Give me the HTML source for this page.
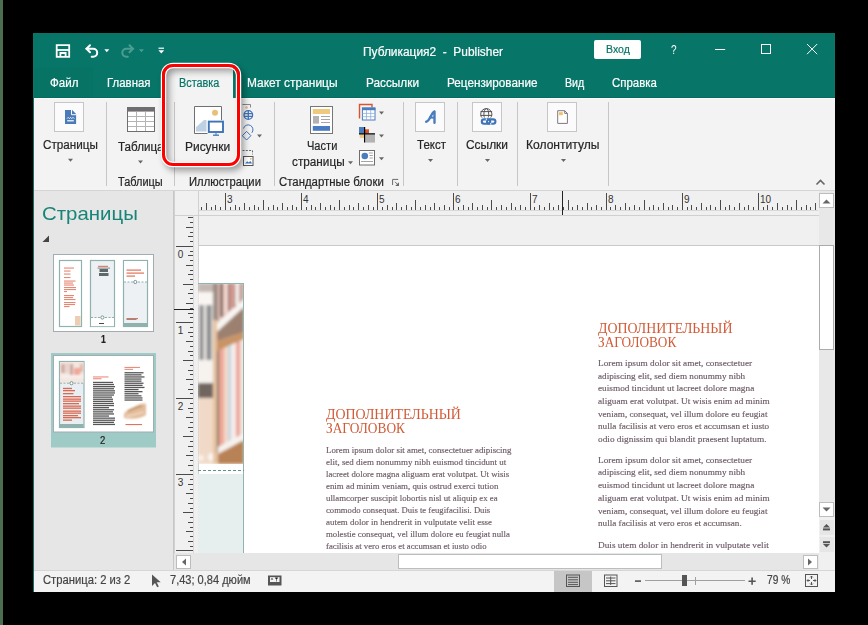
<!DOCTYPE html><html><head><meta charset="utf-8"><style>
html,body{margin:0;padding:0}body{width:868px;height:625px;background:#000;position:relative;overflow:hidden;font-family:"Liberation Sans",sans-serif}
body>div{position:absolute}.t{position:absolute;white-space:pre;line-height:1;transform-origin:0 0}svg{position:absolute;left:0;top:0}
</style></head><body>
<div style="left:0px;top:0px;width:3px;height:625px;background:#4b6e50"></div>
<div style="left:33px;top:33px;width:802px;height:559px;background:#f3f3f3"></div>
<div style="left:33px;top:33px;width:802px;height:65px;background:#077568"></div>
<div style="left:33px;top:33px;width:1px;height:559px;background:#077568"></div>
<div style="left:34px;top:97px;width:801px;height:1px;background:#066b5f"></div>
<div style="left:34px;top:98px;width:801px;height:1px;background:#fbfbfb"></div>
<div style="left:34px;top:68px;width:59px;height:29px;background:#07725f;opacity:.5"></div>
<div style="left:34px;top:190px;width:801px;height:1px;background:#d5d5d5"></div>
<div style="left:594px;top:40px;width:47px;height:19px;background:#fff;border-radius:2px"></div>
<div style="left:163px;top:64px;width:77px;height:35px;background:#f3f3f3;border-radius:10px 10px 0 0"></div>
<div style="left:233px;top:64px;width:7px;height:34px;background:#077568"></div>
<div style="left:106px;top:102px;width:1px;height:84px;background:#c6c6c6"></div>
<div style="left:174px;top:102px;width:1px;height:84px;background:#c6c6c6"></div>
<div style="left:274px;top:102px;width:1px;height:84px;background:#c6c6c6"></div>
<div style="left:403px;top:102px;width:1px;height:84px;background:#c6c6c6"></div>
<div style="left:457px;top:102px;width:1px;height:84px;background:#c6c6c6"></div>
<div style="left:517px;top:102px;width:1px;height:84px;background:#c6c6c6"></div>
<div style="left:608px;top:102px;width:1px;height:84px;background:#c6c6c6"></div>
<div style="left:54px;top:102px;width:30px;height:30px;border:1px solid #c6c6c6;box-sizing:border-box;background:#fbfbfb"></div>
<div style="left:415px;top:102px;width:30px;height:30px;border:1px solid #c6c6c6;box-sizing:border-box;background:#fbfbfb"></div>
<div style="left:472px;top:102px;width:30px;height:30px;border:1px solid #c6c6c6;box-sizing:border-box;background:#fbfbfb"></div>
<div style="left:547px;top:102px;width:30px;height:30px;border:1px solid #c6c6c6;box-sizing:border-box;background:#fbfbfb"></div>
<div style="left:34px;top:191px;width:139px;height:379px;background:#e6e6e6"></div>
<div style="left:173px;top:191px;width:1px;height:379px;background:#c8c8c8"></div>
<div style="left:174px;top:191px;width:661px;height:24px;background:#f0f0f0"></div>
<div style="left:174px;top:191px;width:24px;height:362px;background:#f0f0f0"></div>
<div style="left:198px;top:215px;width:621px;height:31px;background:#f0f0f0"></div>
<div style="left:198px;top:246px;width:621px;height:307px;background:#ffffff"></div>
<div style="left:198px;top:245px;width:621px;height:1px;background:#c9c9c9"></div>
<div style="left:819px;top:191px;width:16px;height:362px;background:#e8e8e8"></div>
<div style="left:174px;top:553px;width:645px;height:17px;background:#e6e6e6"></div>
<div style="left:819px;top:553px;width:16px;height:17px;background:#f0f0f0"></div>
<div style="left:198px;top:210px;width:620px;height:1px;background:#d8d8d8"></div>
<div style="left:174px;top:215px;width:645px;height:1px;background:#d0d0d0"></div>
<div style="left:174px;top:191px;width:1px;height:362px;background:#d0d0d0"></div>
<div style="left:198px;top:191px;width:1px;height:362px;background:#d0d0d0"></div>
<div style="left:193px;top:215px;width:1px;height:338px;background:#d8d8d8"></div>
<div style="left:562px;top:191px;width:1px;height:24px;background:#222"></div>
<div style="left:174px;top:309px;width:20px;height:1px;background:#222"></div>
<svg style="left:198px;top:283px" width="46" height="181" viewBox="0 0 46 181"><defs><filter id="bl" x="-10%" y="-10%" width="120%" height="120%"><feGaussianBlur stdDeviation="1.7"/></filter></defs><g filter="url(#bl)"><rect x="0" y="0" width="46" height="181" fill="#e8d6cc"/><rect x="0" y="0" width="16" height="181" fill="#e4e0dd"/><rect x="0" y="0" width="16" height="9" fill="#c4b8b3"/><rect x="0" y="9" width="16" height="13" fill="#f8f5f2"/><rect x="0" y="22" width="15" height="55" fill="#dcd8d5"/><rect x="2" y="22" width="3" height="55" fill="#7a7e82"/><rect x="9" y="22" width="4" height="55" fill="#808386"/><rect x="0" y="77" width="16" height="23" fill="#f6f2ee"/><rect x="0" y="100" width="16" height="15" fill="#71665f"/><rect x="0" y="115" width="16" height="66" fill="#f0d9c6"/><circle cx="14" cy="174" r="4" fill="#fbf6f2"/><circle cx="3" cy="175" r="3" fill="#f8f0ea"/><rect x="15" y="0" width="6" height="45" fill="#9c8b83"/><rect x="15" y="37" width="5" height="144" fill="#e6c2a0"/><rect x="20" y="0" width="26" height="36" fill="#e6c2ba"/><rect x="22" y="0" width="3" height="34" fill="#75625c"/><rect x="30" y="0" width="2" height="28" fill="#8a6a62"/><rect x="36" y="0" width="1.5" height="24" fill="#6e5a55"/><rect x="26" y="0" width="4" height="30" fill="#f3d6cf"/><rect x="32" y="0" width="4" height="26" fill="#d99c94"/><rect x="37" y="0" width="4" height="22" fill="#f4ebe6"/><rect x="41" y="0" width="5" height="20" fill="#c9a49c"/><rect x="20" y="50" width="26" height="120" fill="#eccabf"/><rect x="20" y="50" width="6" height="120" fill="#eea898"/><rect x="26" y="50" width="4" height="120" fill="#f4d8c8"/><rect x="30" y="50" width="3" height="120" fill="#c3d8e3"/><rect x="33" y="50" width="5" height="120" fill="#f6ecea"/><rect x="38" y="50" width="4" height="120" fill="#eba498"/><rect x="42" y="50" width="4" height="120" fill="#f5e3dc"/><rect x="19" y="60" width="2" height="110" fill="#7a6e68"/><polygon points="19,40 46,16 46,24 19,49" fill="#f8f5f2"/><polygon points="19,49 46,24 46,49 19,58" fill="#9c8070"/><polygon points="19,58 46,49 46,56 19,68" fill="#c89466"/><polygon points="20,164 46,150 46,157 20,171" fill="#f7f2ee"/><polygon points="20,171 46,157 46,181 20,181" fill="#b98256"/></g></svg>
<div style="left:243px;top:283px;width:1px;height:181px;background:#8fb5b0"></div>
<div style="left:198px;top:283px;width:46px;height:1px;background:#8fb5b0"></div>
<div style="left:198px;top:474px;width:46px;height:79px;background:#e6eeee"></div>
<div style="left:243px;top:464px;width:1px;height:89px;background:#8fb5b0"></div>
<div style="left:819px;top:193px;width:15px;height:15px;background:#fff;border:1px solid #bdbdbd;box-sizing:border-box"></div>
<div style="left:819px;top:245px;width:15px;height:105px;background:#fff;border:1px solid #ababab;box-sizing:border-box"></div>
<div style="left:819px;top:502px;width:15px;height:15px;background:#fff;border:1px solid #bdbdbd;box-sizing:border-box"></div>
<div style="left:819px;top:517px;width:16px;height:36px;background:#f0f0f0"></div>
<div style="left:820px;top:520px;width:14px;height:15px;background:#e6e6e6"></div>
<div style="left:820px;top:537px;width:14px;height:15px;background:#e6e6e6"></div>
<div style="left:176px;top:555px;width:15px;height:14px;background:#fff;border:1px solid #bdbdbd;box-sizing:border-box"></div>
<div style="left:398px;top:554px;width:264px;height:15px;background:#fff;border:1px solid #bdbdbd;box-sizing:border-box"></div>
<div style="left:803px;top:555px;width:15px;height:14px;background:#fff;border:1px solid #bdbdbd;box-sizing:border-box"></div>
<div style="left:34px;top:570px;width:801px;height:1px;background:#d6d6d6"></div>
<div style="left:34px;top:571px;width:801px;height:21px;background:#f3f3f3"></div>
<div style="left:554px;top:571px;width:38px;height:21px;background:#c6c6c6"></div>
<div style="left:645px;top:580px;width:100px;height:1px;background:#a0a0a0"></div>
<div style="left:695px;top:577px;width:1px;height:8px;background:#a0a0a0"></div>
<div style="left:682px;top:575px;width:5px;height:11px;background:#555"></div>
<svg width="868" height="625" viewBox="0 0 868 625"><g fill="none" stroke="#fff" stroke-width="1.8"><path d="M56.7 45.1h12.5v11.7h-12.5z"/><path d="M56.7 50h12.5"/><path d="M60.4 57v-4h5.2v4"/></g><g fill="none" stroke="#fff" stroke-width="2" stroke-linecap="round"><path d="M86.5 48.8h6.7a4 4 0 0 1 0 8h-1.5"/><path d="M90 45.3l-3.5 3.5 3.5 3.5"/></g><path d="M104.3 49.3h5l-2.5 2.9z" fill="#fff"/><g fill="none" stroke="#4d9d92" stroke-width="2" stroke-linecap="round"><path d="M133 48.8h-6.7a4 4 0 0 0 0 8h1.5"/><path d="M129.5 45.3l3.5 3.5-3.5 3.5"/></g><path d="M138.9 49.3h5l-2.5 2.9z" fill="#4d9d92"/><rect x="158.5" y="47.6" width="5.5" height="1.2" fill="#fff"/><path d="M158.4 50.2h5.8l-2.9 3.4z" fill="#fff"/><g fill="none" stroke="#fff" stroke-width="1"><path d="M715 49.5h10.2"/><rect x="761.5" y="44.5" width="9" height="9"/><path d="M807 44l10.2 10.2M817.2 44L807 54.2"/></g><path d="M68.0 158.8h5l-2.5 3z" fill="#666"/><path d="M138.0 160.5h5l-2.5 3z" fill="#666"/><path d="M257.0 134.5h5l-2.5 3z" fill="#666"/><path d="M348.0 161.2h5l-2.5 3z" fill="#666"/><path d="M379.0 111.5h5l-2.5 3z" fill="#666"/><path d="M379.0 134.5h5l-2.5 3z" fill="#666"/><path d="M379.0 157.3h5l-2.5 3z" fill="#666"/><path d="M428.0 159h5l-2.5 3z" fill="#666"/><path d="M485.0 159h5l-2.5 3z" fill="#666"/><path d="M561.0 159h5l-2.5 3z" fill="#666"/><path d="M65 110h7.2l3.9 3.9v10h-11.1z" fill="#4a7ab8"/><path d="M71.5 109.5v5.2h5" fill="none" stroke="#fbfbfb" stroke-width="1"/><path d="M67 118.6l1.2-1.2 1.2 1.2 1.2-1.2 1.2 1.2 1.2-1.2 1.2 1.2" fill="none" stroke="#fff" stroke-width="0.9"/><rect x="67.2" y="120.2" width="6.6" height="1.2" fill="#fff"/><rect x="127.5" y="107.5" width="27" height="24" fill="#fff" stroke="#6e6e6e" stroke-width="1"/><rect x="127" y="107" width="28" height="4.6" fill="#6e6e6e"/><g stroke="#b4b4b4" stroke-width="1"><path d="M136.5 111.6v19.4M145.5 111.6v19.4M128 116.5h26M128 121.5h26M128 126.5h26"/></g><path d="M207.5 133.5h-13v-27h27v13.5" fill="#fff" stroke="#707070" stroke-width="1"/><circle cx="215" cy="112.8" r="3" fill="#e9c07a"/><path d="M196 131.5v-4.2l8-7.3h2.5v11.5z" fill="#bed0e3"/><rect x="208.8" y="121.6" width="14.2" height="10.4" fill="#fff" stroke="#3f74b8" stroke-width="1.9"/><path d="M213 135.2h6" stroke="#3f74b8" stroke-width="1.3"/><path d="M216 133v2" stroke="#3f74b8" stroke-width="1"/><path d="M242.5 104.5h8v3" fill="none" stroke="#888" stroke-width="1"/><circle cx="246.5" cy="107.5" r="1.2" fill="#e9b27a"/><g fill="none" stroke="#3f74b8" stroke-width="1.3"><circle cx="248.3" cy="115" r="4.3"/><path d="M244 113.6h8.6M244 116.4h8.6M248.3 110.7v8.6"/></g><g fill="none" stroke="#3f74b8" stroke-width="1"><path d="M243.5 128.5a4.8 4.8 0 1 1 8.3 4.3"/><path d="M246.6 131.4l4.3 4.3-4.3 4.3-4.3-4.3z"/></g><path d="M242.5 150.5h10v4" fill="none" stroke="#666" stroke-width="1" stroke-dasharray="2 1.3"/><rect x="243.5" y="156.5" width="9.5" height="9" fill="#fff" stroke="#555" stroke-width="1"/><path d="M245 163.6l2.2-2.3 1.5 1.3 1.6-1.5 1.9 2.5z" fill="#3f74b8"/><rect x="250" y="158" width="1.6" height="1.6" fill="#e9b27a"/><rect x="310.5" y="106.5" width="22" height="27" fill="#fff" stroke="#767676" stroke-width="1"/><rect x="312.8" y="109" width="17.2" height="5" fill="#efc97e"/><rect x="313" y="116" width="6" height="7.6" fill="#b3b3b3"/><g stroke="#a6a6a6" stroke-width="1"><path d="M321 116.5h9M321 119.5h9M321 122.5h9"/></g><rect x="312.8" y="126" width="17.2" height="4.8" fill="#4a7dbf"/><path d="M359.5 118.5v-14h12.5v3" fill="none" stroke="#d9532c" stroke-width="1.4"/><rect x="362.4" y="108" width="12.6" height="12" fill="#fff" stroke="#4a7dbf" stroke-width="1"/><rect x="362" y="107.6" width="13.4" height="2.6" fill="#4a7dbf"/><g stroke="#8fb0dc" stroke-width="0.8"><path d="M366.5 110v10M370.7 110v10M362.4 113.4h12.6M362.4 116.7h12.6"/></g><rect x="359" y="127" width="5.3" height="6.6" fill="#4a7dbf"/><rect x="365" y="129.3" width="4" height="4.3" fill="#d9532c"/><rect x="359.7" y="134.4" width="4.4" height="3.5" fill="#efc97e"/><rect x="365.3" y="134.3" width="9.7" height="8.3" fill="#b3b3b3"/><path d="M364.6 127v15.6M359 133.9h16" stroke="#000" stroke-width="1.2"/><rect x="359.5" y="150.5" width="15" height="14.5" fill="#fff" stroke="#6e6e6e" stroke-width="1"/><circle cx="364.8" cy="156" r="3.3" fill="#4a7dbf"/><g stroke="#9a9a9a" stroke-width="0.9"><path d="M368.8 153h4M369.5 155.5h3.3M369.5 158h3.3M361 161.5h12"/></g><path d="M426.2 121.8c1.5-.3 2.9-2.2 4.3-5 1.5-2.9 2.6-4.9 4-5.4v11.4" fill="none" stroke="#4a7dbf" stroke-width="2.4" stroke-linecap="round" stroke-linejoin="round"/><path d="M429 117.6h5.6" stroke="#4a7dbf" stroke-width="2"/><defs><clipPath id="gc"><rect x="478" y="106" width="18" height="11.6"/></clipPath></defs><g clip-path="url(#gc)" fill="none" stroke="#555" stroke-width="1"><circle cx="486.3" cy="114.2" r="5.6"/><ellipse cx="486.3" cy="114.2" rx="2.4" ry="5.6"/><path d="M480.5 111.6h11.6M480.5 115.4h11.6"/></g><g fill="none" stroke="#3f74b8" stroke-width="2.1"><rect x="481.8" y="119.4" width="8.4" height="4.4" rx="2.2"/><rect x="487" y="119.4" width="8.4" height="4.4" rx="2.2"/></g><path d="M486.3 118.5v1.8M490.8 122.9v1.8" stroke="#fbfbfb" stroke-width="1"/><path d="M557.7 110.7h7l2.7 2.7v10h-9.7z" fill="#fff" stroke="#7a7a7a" stroke-width="1"/><path d="M564.7 110.7v2.7h2.7" fill="none" stroke="#7a7a7a" stroke-width="1"/><rect x="559" y="112.2" width="3.8" height="3" fill="#efc06a"/><path d="M392.6 185v-5.6h5.6" fill="none" stroke="#6a6a6a" stroke-width="1"/><path d="M395 181.8l3 3" stroke="#6a6a6a" stroke-width="1"/><path d="M399 182.2v3.8h-3.8z" fill="#6a6a6a"/><path d="M816.5 184.5l4-4 4 4" fill="none" stroke="#666" stroke-width="1.6"/><path d="M49 235.5v6.5h-6.5z" fill="#444"/><rect x="201" y="207" width="1" height="3" fill="#4a4a4a"/><rect x="206" y="203" width="1" height="7" fill="#4a4a4a"/><rect x="211" y="207" width="1" height="3" fill="#4a4a4a"/><rect x="215" y="205" width="1" height="5" fill="#4a4a4a"/><rect x="220" y="207" width="1" height="3" fill="#4a4a4a"/><rect x="225" y="193" width="1" height="17" fill="#4a4a4a"/><rect x="230" y="207" width="1" height="3" fill="#4a4a4a"/><rect x="235" y="205" width="1" height="5" fill="#4a4a4a"/><rect x="239" y="207" width="1" height="3" fill="#4a4a4a"/><rect x="244" y="203" width="1" height="7" fill="#4a4a4a"/><rect x="249" y="207" width="1" height="3" fill="#4a4a4a"/><rect x="254" y="205" width="1" height="5" fill="#4a4a4a"/><rect x="258" y="207" width="1" height="3" fill="#4a4a4a"/><rect x="263" y="200" width="1" height="10" fill="#4a4a4a"/><rect x="268" y="207" width="1" height="3" fill="#4a4a4a"/><rect x="273" y="205" width="1" height="5" fill="#4a4a4a"/><rect x="277" y="207" width="1" height="3" fill="#4a4a4a"/><rect x="282" y="203" width="1" height="7" fill="#4a4a4a"/><rect x="287" y="207" width="1" height="3" fill="#4a4a4a"/><rect x="292" y="205" width="1" height="5" fill="#4a4a4a"/><rect x="296" y="207" width="1" height="3" fill="#4a4a4a"/><rect x="301" y="193" width="1" height="17" fill="#4a4a4a"/><rect x="306" y="207" width="1" height="3" fill="#4a4a4a"/><rect x="311" y="205" width="1" height="5" fill="#4a4a4a"/><rect x="315" y="207" width="1" height="3" fill="#4a4a4a"/><rect x="320" y="203" width="1" height="7" fill="#4a4a4a"/><rect x="325" y="207" width="1" height="3" fill="#4a4a4a"/><rect x="330" y="205" width="1" height="5" fill="#4a4a4a"/><rect x="334" y="207" width="1" height="3" fill="#4a4a4a"/><rect x="339" y="200" width="1" height="10" fill="#4a4a4a"/><rect x="344" y="207" width="1" height="3" fill="#4a4a4a"/><rect x="349" y="205" width="1" height="5" fill="#4a4a4a"/><rect x="353" y="207" width="1" height="3" fill="#4a4a4a"/><rect x="358" y="203" width="1" height="7" fill="#4a4a4a"/><rect x="363" y="207" width="1" height="3" fill="#4a4a4a"/><rect x="368" y="205" width="1" height="5" fill="#4a4a4a"/><rect x="373" y="207" width="1" height="3" fill="#4a4a4a"/><rect x="377" y="193" width="1" height="17" fill="#4a4a4a"/><rect x="382" y="207" width="1" height="3" fill="#4a4a4a"/><rect x="387" y="205" width="1" height="5" fill="#4a4a4a"/><rect x="392" y="207" width="1" height="3" fill="#4a4a4a"/><rect x="396" y="203" width="1" height="7" fill="#4a4a4a"/><rect x="401" y="207" width="1" height="3" fill="#4a4a4a"/><rect x="406" y="205" width="1" height="5" fill="#4a4a4a"/><rect x="411" y="207" width="1" height="3" fill="#4a4a4a"/><rect x="415" y="200" width="1" height="10" fill="#4a4a4a"/><rect x="420" y="207" width="1" height="3" fill="#4a4a4a"/><rect x="425" y="205" width="1" height="5" fill="#4a4a4a"/><rect x="430" y="207" width="1" height="3" fill="#4a4a4a"/><rect x="434" y="203" width="1" height="7" fill="#4a4a4a"/><rect x="439" y="207" width="1" height="3" fill="#4a4a4a"/><rect x="444" y="205" width="1" height="5" fill="#4a4a4a"/><rect x="449" y="207" width="1" height="3" fill="#4a4a4a"/><rect x="453" y="193" width="1" height="17" fill="#4a4a4a"/><rect x="458" y="207" width="1" height="3" fill="#4a4a4a"/><rect x="463" y="205" width="1" height="5" fill="#4a4a4a"/><rect x="468" y="207" width="1" height="3" fill="#4a4a4a"/><rect x="472" y="203" width="1" height="7" fill="#4a4a4a"/><rect x="477" y="207" width="1" height="3" fill="#4a4a4a"/><rect x="482" y="205" width="1" height="5" fill="#4a4a4a"/><rect x="487" y="207" width="1" height="3" fill="#4a4a4a"/><rect x="491" y="200" width="1" height="10" fill="#4a4a4a"/><rect x="496" y="207" width="1" height="3" fill="#4a4a4a"/><rect x="501" y="205" width="1" height="5" fill="#4a4a4a"/><rect x="506" y="207" width="1" height="3" fill="#4a4a4a"/><rect x="511" y="203" width="1" height="7" fill="#4a4a4a"/><rect x="515" y="207" width="1" height="3" fill="#4a4a4a"/><rect x="520" y="205" width="1" height="5" fill="#4a4a4a"/><rect x="525" y="207" width="1" height="3" fill="#4a4a4a"/><rect x="530" y="193" width="1" height="17" fill="#4a4a4a"/><rect x="534" y="207" width="1" height="3" fill="#4a4a4a"/><rect x="539" y="205" width="1" height="5" fill="#4a4a4a"/><rect x="544" y="207" width="1" height="3" fill="#4a4a4a"/><rect x="549" y="203" width="1" height="7" fill="#4a4a4a"/><rect x="553" y="207" width="1" height="3" fill="#4a4a4a"/><rect x="558" y="205" width="1" height="5" fill="#4a4a4a"/><rect x="563" y="207" width="1" height="3" fill="#4a4a4a"/><rect x="568" y="200" width="1" height="10" fill="#4a4a4a"/><rect x="572" y="207" width="1" height="3" fill="#4a4a4a"/><rect x="577" y="205" width="1" height="5" fill="#4a4a4a"/><rect x="582" y="207" width="1" height="3" fill="#4a4a4a"/><rect x="587" y="203" width="1" height="7" fill="#4a4a4a"/><rect x="591" y="207" width="1" height="3" fill="#4a4a4a"/><rect x="596" y="205" width="1" height="5" fill="#4a4a4a"/><rect x="601" y="207" width="1" height="3" fill="#4a4a4a"/><rect x="606" y="193" width="1" height="17" fill="#4a4a4a"/><rect x="610" y="207" width="1" height="3" fill="#4a4a4a"/><rect x="615" y="205" width="1" height="5" fill="#4a4a4a"/><rect x="620" y="207" width="1" height="3" fill="#4a4a4a"/><rect x="625" y="203" width="1" height="7" fill="#4a4a4a"/><rect x="629" y="207" width="1" height="3" fill="#4a4a4a"/><rect x="634" y="205" width="1" height="5" fill="#4a4a4a"/><rect x="639" y="207" width="1" height="3" fill="#4a4a4a"/><rect x="644" y="200" width="1" height="10" fill="#4a4a4a"/><rect x="649" y="207" width="1" height="3" fill="#4a4a4a"/><rect x="653" y="205" width="1" height="5" fill="#4a4a4a"/><rect x="658" y="207" width="1" height="3" fill="#4a4a4a"/><rect x="663" y="203" width="1" height="7" fill="#4a4a4a"/><rect x="668" y="207" width="1" height="3" fill="#4a4a4a"/><rect x="672" y="205" width="1" height="5" fill="#4a4a4a"/><rect x="677" y="207" width="1" height="3" fill="#4a4a4a"/><rect x="682" y="193" width="1" height="17" fill="#4a4a4a"/><rect x="687" y="207" width="1" height="3" fill="#4a4a4a"/><rect x="691" y="205" width="1" height="5" fill="#4a4a4a"/><rect x="696" y="207" width="1" height="3" fill="#4a4a4a"/><rect x="701" y="203" width="1" height="7" fill="#4a4a4a"/><rect x="706" y="207" width="1" height="3" fill="#4a4a4a"/><rect x="710" y="205" width="1" height="5" fill="#4a4a4a"/><rect x="715" y="207" width="1" height="3" fill="#4a4a4a"/><rect x="720" y="200" width="1" height="10" fill="#4a4a4a"/><rect x="725" y="207" width="1" height="3" fill="#4a4a4a"/><rect x="729" y="205" width="1" height="5" fill="#4a4a4a"/><rect x="734" y="207" width="1" height="3" fill="#4a4a4a"/><rect x="739" y="203" width="1" height="7" fill="#4a4a4a"/><rect x="744" y="207" width="1" height="3" fill="#4a4a4a"/><rect x="748" y="205" width="1" height="5" fill="#4a4a4a"/><rect x="753" y="207" width="1" height="3" fill="#4a4a4a"/><rect x="758" y="193" width="1" height="17" fill="#4a4a4a"/><rect x="763" y="207" width="1" height="3" fill="#4a4a4a"/><rect x="767" y="205" width="1" height="5" fill="#4a4a4a"/><rect x="772" y="207" width="1" height="3" fill="#4a4a4a"/><rect x="777" y="203" width="1" height="7" fill="#4a4a4a"/><rect x="782" y="207" width="1" height="3" fill="#4a4a4a"/><rect x="787" y="205" width="1" height="5" fill="#4a4a4a"/><rect x="791" y="207" width="1" height="3" fill="#4a4a4a"/><rect x="796" y="200" width="1" height="10" fill="#4a4a4a"/><rect x="801" y="207" width="1" height="3" fill="#4a4a4a"/><rect x="806" y="205" width="1" height="5" fill="#4a4a4a"/><rect x="810" y="207" width="1" height="3" fill="#4a4a4a"/><rect x="815" y="203" width="1" height="7" fill="#4a4a4a"/><rect x="188" y="217" width="5" height="1" fill="#4a4a4a"/><rect x="190" y="222" width="3" height="1" fill="#4a4a4a"/><rect x="186" y="227" width="7" height="1" fill="#4a4a4a"/><rect x="190" y="232" width="3" height="1" fill="#4a4a4a"/><rect x="188" y="236" width="5" height="1" fill="#4a4a4a"/><rect x="190" y="241" width="3" height="1" fill="#4a4a4a"/><rect x="176" y="246" width="17" height="1" fill="#4a4a4a"/><rect x="190" y="251" width="3" height="1" fill="#4a4a4a"/><rect x="188" y="255" width="5" height="1" fill="#4a4a4a"/><rect x="190" y="260" width="3" height="1" fill="#4a4a4a"/><rect x="186" y="265" width="7" height="1" fill="#4a4a4a"/><rect x="190" y="270" width="3" height="1" fill="#4a4a4a"/><rect x="188" y="274" width="5" height="1" fill="#4a4a4a"/><rect x="190" y="279" width="3" height="1" fill="#4a4a4a"/><rect x="183" y="284" width="10" height="1" fill="#4a4a4a"/><rect x="190" y="289" width="3" height="1" fill="#4a4a4a"/><rect x="188" y="293" width="5" height="1" fill="#4a4a4a"/><rect x="190" y="298" width="3" height="1" fill="#4a4a4a"/><rect x="186" y="303" width="7" height="1" fill="#4a4a4a"/><rect x="190" y="308" width="3" height="1" fill="#4a4a4a"/><rect x="188" y="313" width="5" height="1" fill="#4a4a4a"/><rect x="190" y="317" width="3" height="1" fill="#4a4a4a"/><rect x="176" y="322" width="17" height="1" fill="#4a4a4a"/><rect x="190" y="327" width="3" height="1" fill="#4a4a4a"/><rect x="188" y="332" width="5" height="1" fill="#4a4a4a"/><rect x="190" y="336" width="3" height="1" fill="#4a4a4a"/><rect x="186" y="341" width="7" height="1" fill="#4a4a4a"/><rect x="190" y="346" width="3" height="1" fill="#4a4a4a"/><rect x="188" y="351" width="5" height="1" fill="#4a4a4a"/><rect x="190" y="355" width="3" height="1" fill="#4a4a4a"/><rect x="183" y="360" width="10" height="1" fill="#4a4a4a"/><rect x="190" y="365" width="3" height="1" fill="#4a4a4a"/><rect x="188" y="370" width="5" height="1" fill="#4a4a4a"/><rect x="190" y="374" width="3" height="1" fill="#4a4a4a"/><rect x="186" y="379" width="7" height="1" fill="#4a4a4a"/><rect x="190" y="384" width="3" height="1" fill="#4a4a4a"/><rect x="188" y="389" width="5" height="1" fill="#4a4a4a"/><rect x="190" y="393" width="3" height="1" fill="#4a4a4a"/><rect x="176" y="398" width="17" height="1" fill="#4a4a4a"/><rect x="190" y="403" width="3" height="1" fill="#4a4a4a"/><rect x="188" y="408" width="5" height="1" fill="#4a4a4a"/><rect x="190" y="412" width="3" height="1" fill="#4a4a4a"/><rect x="186" y="417" width="7" height="1" fill="#4a4a4a"/><rect x="190" y="422" width="3" height="1" fill="#4a4a4a"/><rect x="188" y="427" width="5" height="1" fill="#4a4a4a"/><rect x="190" y="431" width="3" height="1" fill="#4a4a4a"/><rect x="183" y="436" width="10" height="1" fill="#4a4a4a"/><rect x="190" y="441" width="3" height="1" fill="#4a4a4a"/><rect x="188" y="446" width="5" height="1" fill="#4a4a4a"/><rect x="190" y="451" width="3" height="1" fill="#4a4a4a"/><rect x="186" y="455" width="7" height="1" fill="#4a4a4a"/><rect x="190" y="460" width="3" height="1" fill="#4a4a4a"/><rect x="188" y="465" width="5" height="1" fill="#4a4a4a"/><rect x="190" y="470" width="3" height="1" fill="#4a4a4a"/><rect x="176" y="474" width="17" height="1" fill="#4a4a4a"/><rect x="190" y="479" width="3" height="1" fill="#4a4a4a"/><rect x="188" y="484" width="5" height="1" fill="#4a4a4a"/><rect x="190" y="489" width="3" height="1" fill="#4a4a4a"/><rect x="186" y="493" width="7" height="1" fill="#4a4a4a"/><rect x="190" y="498" width="3" height="1" fill="#4a4a4a"/><rect x="188" y="503" width="5" height="1" fill="#4a4a4a"/><rect x="190" y="508" width="3" height="1" fill="#4a4a4a"/><rect x="183" y="512" width="10" height="1" fill="#4a4a4a"/><rect x="190" y="517" width="3" height="1" fill="#4a4a4a"/><rect x="188" y="522" width="5" height="1" fill="#4a4a4a"/><rect x="190" y="527" width="3" height="1" fill="#4a4a4a"/><rect x="186" y="531" width="7" height="1" fill="#4a4a4a"/><rect x="190" y="536" width="3" height="1" fill="#4a4a4a"/><rect x="188" y="541" width="5" height="1" fill="#4a4a4a"/><rect x="190" y="546" width="3" height="1" fill="#4a4a4a"/><rect x="176" y="550" width="17" height="1" fill="#4a4a4a"/><path d="M198 470.5h46" stroke="#5f908b" stroke-width="1" stroke-dasharray="3 2"/><path d="M822.5 203.5h8l-4-4z" fill="#666"/><path d="M822.5 507.5h8l-4 4z" fill="#666"/><path d="M823 527.6h7l-3.5-3.6z" fill="#555"/><rect x="823" y="528.4" width="7" height="2" fill="#555"/><rect x="823" y="541.2" width="7" height="2" fill="#555"/><path d="M823 544h7l-3.5 3.6z" fill="#555"/><path d="M186 558.5v7l-4-3.5z" fill="#666"/><path d="M808 558.5v7l4-3.5z" fill="#666"/><path d="M152 574.5v11.5l3-3 2.2 4.3 1.6-.8-2.1-4.2h4z" fill="#555"/><rect x="268" y="575.5" width="13.5" height="10" fill="#555"/><rect x="270" y="577" width="9.5" height="5" fill="#f3f3f3"/><path d="M271 577.5l2 2.5M273 577.5l-2 2.5M275 577.5l1.5 2 1.5-2M276.5 579.5v2" stroke="#555" stroke-width="0.7"/><rect x="566.5" y="575" width="13" height="11.5" fill="none" stroke="#555" stroke-width="1"/><path d="M568 577.3h10M568 579.8h10M568 582.3h10M568 584.6h10" stroke="#555" stroke-width="1"/><rect x="604.5" y="575" width="12.5" height="11.5" fill="none" stroke="#555" stroke-width="1"/><path d="M606 578h9.5M606 580.8h9.5M606 583.6h9.5M610.7 576.5v8.5" stroke="#555" stroke-width="1"/><rect x="635" y="580.3" width="6" height="1.6" fill="#555"/><path d="M748.5 581.2h7.2M752.1 577.6v7.2" stroke="#555" stroke-width="1.6"/><rect x="805.5" y="574.5" width="12" height="12" fill="none" stroke="#555" stroke-width="1"/><path d="M811.5 576v3M811.5 582v3M807 580.5h3M813 580.5h3" stroke="#555" stroke-width="1"/><path d="M810 577.5l1.5-1.5 1.5 1.5M810 583.5l1.5 1.5 1.5-1.5M808.5 579l-1.5 1.5 1.5 1.5M814.5 579l1.5 1.5-1.5 1.5" fill="none" stroke="#555" stroke-width="0.8"/><g><rect x="53.5" y="254.5" width="100" height="77" fill="#fff" stroke="#a3abb3" stroke-width="1"/><rect x="59.5" y="260.5" width="22" height="66" fill="#fff" stroke="#8fb2af" stroke-width="1.2"/><rect x="64" y="267.5" width="10" height="1.1" fill="#e2725a" opacity="0.85"/><rect x="64" y="270.5" width="6.5" height="1.1" fill="#e2725a" opacity="0.85"/><rect x="64" y="273.5" width="6.5" height="1.1" fill="#e2725a" opacity="0.85"/><rect x="64" y="277.0" width="6.5" height="1.1" fill="#e2725a" opacity="0.85"/><rect x="64" y="280.5" width="11.5" height="1.1" fill="#e2725a" opacity="0.85"/><rect x="64" y="282.5" width="9" height="1.1" fill="#e2725a" opacity="0.85"/><rect x="64" y="284.5" width="10" height="1.1" fill="#e2725a" opacity="0.85"/><rect x="64" y="287.0" width="12" height="1.1" fill="#e2725a" opacity="0.85"/><rect x="64" y="289.0" width="12" height="1.1" fill="#e2725a" opacity="0.85"/><rect x="64" y="291.0" width="3" height="1.1" fill="#e2725a" opacity="0.85"/><rect x="64" y="295.0" width="10" height="1.1" fill="#e2725a" opacity="0.85"/><rect x="64" y="297.0" width="9" height="1.1" fill="#e2725a" opacity="0.85"/><rect x="64" y="299.0" width="11.5" height="1.1" fill="#e2725a" opacity="0.85"/><rect x="64" y="302.0" width="11.5" height="1.1" fill="#e2725a" opacity="0.85"/><rect x="64" y="304.0" width="11" height="1.1" fill="#e2725a" opacity="0.85"/><rect x="64" y="306.0" width="5.5" height="1.1" fill="#e2725a" opacity="0.85"/><rect x="75" y="316" width="5.5" height="9.5" fill="#e8c0a0" opacity="0.8"/><rect x="90.5" y="260.5" width="24" height="66" fill="#eef1f4" stroke="#8fb2af" stroke-width="1.2"/><rect x="91" y="318" width="23" height="8.2" fill="#fff"/><rect x="98" y="265.8" width="10" height="1.1" fill="#e2725a"/><rect x="97.5" y="267.6" width="12.5" height="1" fill="#7c8585"/><rect x="99.5" y="269" width="8.5" height="3" fill="#5d6a6a"/><rect x="99" y="273" width="9.5" height="3" fill="#5d6a6a"/><path d="M91 317.5h23" stroke="#8fb2af" stroke-width="1" stroke-dasharray="2 1.5"/><circle cx="102.4" cy="317.5" r="1.6" fill="#fff" stroke="#6a8a88" stroke-width="0.9"/><rect x="99" y="323" width="5" height="1" fill="#4a4a4a"/><rect x="123.5" y="260.5" width="24" height="66" fill="#eef1f4" stroke="#8fb2af" stroke-width="1.2"/><rect x="124" y="261" width="23" height="21" fill="#fff"/><rect x="126.5" y="269.5" width="14.5" height="1.2" fill="#e2725a"/><rect x="126.5" y="272.5" width="17.5" height="1.2" fill="#e2725a"/><rect x="126.5" y="275.5" width="8.5" height="1.2" fill="#e2725a"/><path d="M124 282h23" stroke="#8fb2af" stroke-width="1" stroke-dasharray="2 1.5"/><circle cx="135.3" cy="282" r="1.6" fill="#fff" stroke="#6a8a88" stroke-width="0.9"/><rect x="126.5" y="318" width="11.5" height="1.1" fill="#e2725a"/><rect x="126.5" y="319.2" width="10" height="0.8" fill="#777"/><rect x="123.5" y="323" width="24.5" height="4" fill="#8fb2af"/><rect x="51" y="353" width="105" height="94.5" fill="#9ecbc5"/><rect x="53.5" y="355.5" width="100" height="76.5" fill="#fff" stroke="#a3abb3" stroke-width="1"/><rect x="59.5" y="361.5" width="24.5" height="66" fill="#e9eef2" stroke="#8fb2af" stroke-width="1.2"/><defs><filter id="tb" x="-20%" y="-20%" width="140%" height="140%"><feGaussianBlur stdDeviation="0.8"/></filter></defs><rect x="60" y="362" width="23.5" height="21" fill="#f3e6e0"/><g filter="url(#tb)"><rect x="61" y="364" width="4" height="9" fill="#d2b0a6"/><rect x="66" y="363" width="3" height="10" fill="#e8cfc8"/><rect x="70" y="364" width="3" height="11" fill="#c9a8a0"/><rect x="74" y="368" width="6" height="9" fill="#f2a898"/><rect x="80" y="364" width="3" height="8" fill="#e0b8a8"/><rect x="61" y="375" width="22" height="3" fill="#f7efea"/></g><path d="M60 383.2h23.5" stroke="#8fb2af" stroke-width="1" stroke-dasharray="2 1.5"/><circle cx="71.5" cy="383.2" r="1.6" fill="#fff" stroke="#6a8a88" stroke-width="0.9"/><rect x="63" y="387.8" width="9" height="1.3" fill="#d95a3e" opacity="0.9"/><rect x="63" y="390.0" width="12" height="1.3" fill="#d95a3e" opacity="0.9"/><rect x="63" y="393.0" width="10.5" height="1.3" fill="#d95a3e" opacity="0.9"/><rect x="63" y="396.0" width="18" height="1.3" fill="#d95a3e" opacity="0.9"/><rect x="63" y="398.5" width="18" height="1.3" fill="#d95a3e" opacity="0.9"/><rect x="63" y="400.5" width="18" height="1.3" fill="#d95a3e" opacity="0.9"/><rect x="63" y="403.0" width="16" height="1.3" fill="#d95a3e" opacity="0.9"/><rect x="63" y="405.5" width="18" height="1.3" fill="#d95a3e" opacity="0.9"/><rect x="63" y="407.5" width="18" height="1.3" fill="#d95a3e" opacity="0.9"/><rect x="63" y="410.5" width="18" height="1.3" fill="#d95a3e" opacity="0.9"/><rect x="63" y="412.5" width="18" height="1.3" fill="#d95a3e" opacity="0.9"/><rect x="63" y="415.0" width="15" height="1.3" fill="#d95a3e" opacity="0.9"/><rect x="63" y="417.0" width="18" height="1.3" fill="#d95a3e" opacity="0.9"/><rect x="63" y="419.5" width="9" height="1.3" fill="#d95a3e" opacity="0.9"/><rect x="60" y="424" width="23.5" height="3.8" fill="#8fb2af"/><rect x="93" y="376.4" width="15.5" height="1.1" fill="#e2725a" opacity=".8"/><rect x="93" y="378.2" width="8.5" height="1.1" fill="#e2725a" opacity=".8"/><rect x="93" y="381.8" width="20" height="1.3" fill="#3a3a3a" opacity="0.85"/><rect x="93" y="383.9" width="21" height="1.3" fill="#3a3a3a" opacity="0.85"/><rect x="93" y="386.0" width="22" height="1.3" fill="#3a3a3a" opacity="0.85"/><rect x="93" y="388.1" width="21" height="1.3" fill="#3a3a3a" opacity="0.85"/><rect x="93" y="390.2" width="22" height="1.3" fill="#3a3a3a" opacity="0.85"/><rect x="93" y="392.3" width="22" height="1.3" fill="#3a3a3a" opacity="0.85"/><rect x="93" y="394.4" width="21" height="1.3" fill="#3a3a3a" opacity="0.85"/><rect x="93" y="396.5" width="19" height="1.3" fill="#3a3a3a" opacity="0.85"/><rect x="93" y="398.6" width="20" height="1.3" fill="#3a3a3a" opacity="0.85"/><rect x="93" y="400.7" width="20" height="1.3" fill="#3a3a3a" opacity="0.85"/><rect x="93" y="402.8" width="21" height="1.3" fill="#3a3a3a" opacity="0.85"/><rect x="93" y="404.9" width="21" height="1.3" fill="#3a3a3a" opacity="0.85"/><rect x="93" y="407.0" width="16" height="1.3" fill="#3a3a3a" opacity="0.85"/><rect x="93" y="409.1" width="21" height="1.3" fill="#3a3a3a" opacity="0.85"/><rect x="93" y="411.2" width="20" height="1.3" fill="#3a3a3a" opacity="0.85"/><rect x="93" y="413.3" width="21" height="1.3" fill="#3a3a3a" opacity="0.85"/><rect x="93" y="415.4" width="16" height="1.3" fill="#3a3a3a" opacity="0.85"/><rect x="93" y="417.5" width="22" height="1.3" fill="#3a3a3a" opacity="0.85"/><rect x="93" y="419.6" width="22" height="1.3" fill="#3a3a3a" opacity="0.85"/><rect x="93" y="421.7" width="21" height="1.3" fill="#3a3a3a" opacity="0.85"/><rect x="93" y="423.8" width="22" height="1.3" fill="#3a3a3a" opacity="0.85"/><rect x="124.5" y="366.9" width="15.5" height="1.1" fill="#e2725a" opacity=".8"/><rect x="124.5" y="368.8" width="8.5" height="1.1" fill="#e2725a" opacity=".8"/><rect x="124.5" y="372.1" width="19" height="1.3" fill="#3a3a3a" opacity="0.85"/><rect x="124.5" y="374.2" width="17" height="1.3" fill="#3a3a3a" opacity="0.85"/><rect x="124.5" y="376.3" width="20" height="1.3" fill="#3a3a3a" opacity="0.85"/><rect x="124.5" y="378.4" width="17" height="1.3" fill="#3a3a3a" opacity="0.85"/><rect x="124.5" y="380.5" width="17" height="1.3" fill="#3a3a3a" opacity="0.85"/><rect x="124.5" y="382.6" width="19" height="1.3" fill="#3a3a3a" opacity="0.85"/><rect x="124.5" y="384.7" width="18" height="1.3" fill="#3a3a3a" opacity="0.85"/><rect x="124.5" y="386.8" width="20" height="1.3" fill="#3a3a3a" opacity="0.85"/><rect x="124.5" y="388.9" width="14" height="1.3" fill="#3a3a3a" opacity="0.85"/><rect x="124.5" y="391.0" width="18" height="1.3" fill="#3a3a3a" opacity="0.85"/><rect x="124.5" y="393.1" width="14" height="1.3" fill="#3a3a3a" opacity="0.85"/><rect x="124.5" y="395.2" width="17" height="1.3" fill="#3a3a3a" opacity="0.85"/><rect x="124.5" y="397.3" width="18" height="1.3" fill="#3a3a3a" opacity="0.85"/><rect x="124.5" y="399.4" width="18" height="1.3" fill="#3a3a3a" opacity="0.85"/><g filter="url(#tb)"><path d="M124 414c3-5 8-5 12-8 4-2 7-3 10-2v11c-5 3-12 5-22 3z" fill="#e2bb98"/><path d="M128 411c4-2 8-4 14-5" stroke="#b98560" stroke-width="1.6" fill="none"/><path d="M126 416c5 0 10-2 18-4" stroke="#f3dcc8" stroke-width="1.6" fill="none"/></g><rect x="125.5" y="424" width="16.5" height="1.1" fill="#e2725a"/></g></svg>
<span class="t" style="left:363px;top:45.94px;font-size:12px;color:#ffffff;transform:scaleX(0.992);-webkit-text-stroke:0.2px #ffffff">Публикация2  -  Publisher</span>
<span class="t" style="left:605.9px;top:43.67px;font-size:11.5px;color:#077568;transform:scaleX(0.915);-webkit-text-stroke:0.2px #077568">Вход</span>
<span class="t" style="left:671.2px;top:42.77px;font-size:13.5px;color:#ffffff;transform:scaleX(0.745)">?</span>
<span class="t" style="left:49.6px;top:76.94px;font-size:12px;color:#ffffff;transform:scaleX(0.962);-webkit-text-stroke:0.2px #ffffff">Файл</span>
<span class="t" style="left:107px;top:76.94px;font-size:12px;color:#ffffff;transform:scaleX(0.952);-webkit-text-stroke:0.2px #ffffff">Главная</span>
<span class="t" style="left:247.3px;top:76.94px;font-size:12px;color:#ffffff;transform:scaleX(0.995);-webkit-text-stroke:0.2px #ffffff">Макет страницы</span>
<span class="t" style="left:365.5px;top:76.94px;font-size:12px;color:#ffffff;transform:scaleX(0.984);-webkit-text-stroke:0.2px #ffffff">Рассылки</span>
<span class="t" style="left:446.5px;top:76.94px;font-size:12px;color:#ffffff;transform:scaleX(0.977);-webkit-text-stroke:0.2px #ffffff">Рецензирование</span>
<span class="t" style="left:564.6px;top:76.94px;font-size:12px;color:#ffffff;transform:scaleX(0.889);-webkit-text-stroke:0.2px #ffffff">Вид</span>
<span class="t" style="left:611.6px;top:76.94px;font-size:12px;color:#ffffff;transform:scaleX(0.954);-webkit-text-stroke:0.2px #ffffff">Справка</span>
<span class="t" style="left:178.6px;top:76.94px;font-size:12px;color:#077568;transform:scaleX(0.906);-webkit-text-stroke:0.2px #077568">Вставка</span>
<span class="t" style="left:42.5px;top:138.64px;font-size:12px;color:#262626;transform:scaleX(0.973);-webkit-text-stroke:0.2px #262626">Страницы</span>
<span class="t" style="left:117.6px;top:141.04px;font-size:12px;color:#262626;transform:scaleX(0.967);-webkit-text-stroke:0.2px #262626">Таблица</span>
<span class="t" style="left:185.4px;top:141.04px;font-size:12px;color:#262626;transform:scaleX(0.996);-webkit-text-stroke:0.2px #262626">Рисунки</span>
<span class="t" style="left:307.2px;top:140.44px;font-size:12px;color:#262626;transform:scaleX(0.922);-webkit-text-stroke:0.2px #262626">Части</span>
<span class="t" style="left:291.8px;top:156.14px;font-size:12px;color:#262626;transform:scaleX(0.980);-webkit-text-stroke:0.2px #262626">страницы</span>
<span class="t" style="left:416.5px;top:139.34px;font-size:12px;color:#262626;transform:scaleX(0.960);-webkit-text-stroke:0.2px #262626">Текст</span>
<span class="t" style="left:466.4px;top:139.34px;font-size:12px;color:#262626;transform:scaleX(0.994);-webkit-text-stroke:0.2px #262626">Ссылки</span>
<span class="t" style="left:526.2px;top:139.34px;font-size:12px;color:#262626;transform:scaleX(1.006);-webkit-text-stroke:0.2px #262626">Колонтитулы</span>
<span class="t" style="left:117.6px;top:175.84px;font-size:12px;color:#262626;transform:scaleX(0.910);-webkit-text-stroke:0.2px #262626">Таблицы</span>
<span class="t" style="left:188.8px;top:175.84px;font-size:12px;color:#262626;transform:scaleX(0.937);-webkit-text-stroke:0.2px #262626">Иллюстрации</span>
<span class="t" style="left:278.7px;top:175.84px;font-size:12px;color:#262626;transform:scaleX(0.950);-webkit-text-stroke:0.2px #262626">Стандартные блоки</span>
<span class="t" style="left:41.6px;top:203.82px;font-size:19px;color:#168477;transform:scaleX(1.074)">Страницы</span>
<span class="t" style="left:227px;top:194.73px;font-size:10px;color:#333333">3</span>
<span class="t" style="left:303px;top:194.73px;font-size:10px;color:#333333">4</span>
<span class="t" style="left:379px;top:194.73px;font-size:10px;color:#333333">5</span>
<span class="t" style="left:455px;top:194.73px;font-size:10px;color:#333333">6</span>
<span class="t" style="left:532px;top:194.73px;font-size:10px;color:#333333">7</span>
<span class="t" style="left:608px;top:194.73px;font-size:10px;color:#333333">8</span>
<span class="t" style="left:684px;top:194.73px;font-size:10px;color:#333333">9</span>
<span class="t" style="left:760px;top:194.73px;font-size:10px;color:#333333">10</span>
<span class="t" style="left:177.8px;top:249.53px;font-size:10px;color:#333333">0</span>
<span class="t" style="left:177.8px;top:325.54px;font-size:10px;color:#333333">1</span>
<span class="t" style="left:177.8px;top:401.54px;font-size:10px;color:#333333">2</span>
<span class="t" style="left:177.8px;top:477.54px;font-size:10px;color:#333333">3</span>
<span class="t" style="left:325.8px;top:407.44px;font-size:15px;color:#d25a36;font-family:'Liberation Serif', serif;transform:scaleX(0.927)">ДОПОЛНИТЕЛЬНЫЙ</span>
<span class="t" style="left:325.8px;top:420.94px;font-size:15px;color:#d25a36;font-family:'Liberation Serif', serif;transform:scaleX(0.892)">ЗАГОЛОВОК</span>
<span class="t" style="left:326.3px;top:445.96px;font-size:9px;color:#6c5a66;font-family:'Liberation Serif', serif;transform:scaleX(0.982);-webkit-text-stroke:0.15px #6c5a66">Lorem ipsum dolor sit amet, consectetuer adipiscing</span>
<span class="t" style="left:326.3px;top:457.94px;font-size:9px;color:#6c5a66;font-family:'Liberation Serif', serif;transform:scaleX(0.993);-webkit-text-stroke:0.15px #6c5a66">elit, sed diem nonummy nibh euismod tincidunt ut</span>
<span class="t" style="left:326.3px;top:469.92px;font-size:9px;color:#6c5a66;font-family:'Liberation Serif', serif;transform:scaleX(0.972);-webkit-text-stroke:0.15px #6c5a66">lacreet dolore magna aliguam erat volutpat. Ut wisis</span>
<span class="t" style="left:326.3px;top:481.90px;font-size:9px;color:#6c5a66;font-family:'Liberation Serif', serif;transform:scaleX(0.985);-webkit-text-stroke:0.15px #6c5a66">enim ad minim veniam, quis ostrud exerci tution</span>
<span class="t" style="left:326.3px;top:493.88px;font-size:9px;color:#6c5a66;font-family:'Liberation Serif', serif;transform:scaleX(0.977);-webkit-text-stroke:0.15px #6c5a66">ullamcorper suscipit lobortis nisl ut aliquip ex ea</span>
<span class="t" style="left:326.3px;top:505.86px;font-size:9px;color:#6c5a66;font-family:'Liberation Serif', serif;transform:scaleX(0.959);-webkit-text-stroke:0.15px #6c5a66">commodo consequat. Duis te feugifacilisi. Duis</span>
<span class="t" style="left:326.3px;top:517.84px;font-size:9px;color:#6c5a66;font-family:'Liberation Serif', serif;transform:scaleX(0.990);-webkit-text-stroke:0.15px #6c5a66">autem dolor in hendrerit in vulputate velit esse</span>
<span class="t" style="left:326.3px;top:529.82px;font-size:9px;color:#6c5a66;font-family:'Liberation Serif', serif;transform:scaleX(0.973);-webkit-text-stroke:0.15px #6c5a66">molestie consequat, vel illum dolore eu feugiat nulla</span>
<span class="t" style="left:326.3px;top:541.80px;font-size:9px;color:#6c5a66;font-family:'Liberation Serif', serif;transform:scaleX(0.971);-webkit-text-stroke:0.15px #6c5a66">facilisis at vero eros et accumsan et iusto odio</span>
<span class="t" style="left:598.3px;top:320.94px;font-size:15px;color:#d25a36;font-family:'Liberation Serif', serif;transform:scaleX(0.924)">ДОПОЛНИТЕЛЬНЫЙ</span>
<span class="t" style="left:598.3px;top:334.54px;font-size:15px;color:#d25a36;font-family:'Liberation Serif', serif;transform:scaleX(0.883)">ЗАГОЛОВОК</span>
<span class="t" style="left:598.3px;top:359.26px;font-size:9px;color:#6c5a66;font-family:'Liberation Serif', serif;transform:scaleX(1.031);-webkit-text-stroke:0.15px #6c5a66">Lorem ipsum dolor sit amet, consectetuer</span>
<span class="t" style="left:598.3px;top:371.86px;font-size:9px;color:#6c5a66;font-family:'Liberation Serif', serif;transform:scaleX(1.018);-webkit-text-stroke:0.15px #6c5a66">adipiscing elit, sed diem nonummy nibh</span>
<span class="t" style="left:598.3px;top:384.46px;font-size:9px;color:#6c5a66;font-family:'Liberation Serif', serif;transform:scaleX(1.030);-webkit-text-stroke:0.15px #6c5a66">euismod tincidunt ut lacreet dolore magna</span>
<span class="t" style="left:598.3px;top:397.06px;font-size:9px;color:#6c5a66;font-family:'Liberation Serif', serif;transform:scaleX(1.025);-webkit-text-stroke:0.15px #6c5a66">aliguam erat volutpat. Ut wisis enim ad minim</span>
<span class="t" style="left:598.3px;top:409.66px;font-size:9px;color:#6c5a66;font-family:'Liberation Serif', serif;transform:scaleX(1.015);-webkit-text-stroke:0.15px #6c5a66">veniam, consequat, vel illum dolore eu feugiat</span>
<span class="t" style="left:598.3px;top:422.26px;font-size:9px;color:#6c5a66;font-family:'Liberation Serif', serif;transform:scaleX(1.022);-webkit-text-stroke:0.15px #6c5a66">nulla facilisis at vero eros et accumsan et iusto</span>
<span class="t" style="left:598.3px;top:434.86px;font-size:9px;color:#6c5a66;font-family:'Liberation Serif', serif;transform:scaleX(1.034);-webkit-text-stroke:0.15px #6c5a66">odio dignissim qui blandit praesent luptatum.</span>
<span class="t" style="left:598.3px;top:455.66px;font-size:9px;color:#6c5a66;font-family:'Liberation Serif', serif;transform:scaleX(1.031);-webkit-text-stroke:0.15px #6c5a66">Lorem ipsum dolor sit amet, consectetuer</span>
<span class="t" style="left:598.3px;top:468.38px;font-size:9px;color:#6c5a66;font-family:'Liberation Serif', serif;transform:scaleX(1.018);-webkit-text-stroke:0.15px #6c5a66">adipiscing elit, sed diem nonummy nibh</span>
<span class="t" style="left:598.3px;top:481.10px;font-size:9px;color:#6c5a66;font-family:'Liberation Serif', serif;transform:scaleX(1.030);-webkit-text-stroke:0.15px #6c5a66">euismod tincidunt ut lacreet dolore magna</span>
<span class="t" style="left:598.3px;top:493.82px;font-size:9px;color:#6c5a66;font-family:'Liberation Serif', serif;transform:scaleX(1.025);-webkit-text-stroke:0.15px #6c5a66">aliguam erat volutpat. Ut wisis enim ad minim</span>
<span class="t" style="left:598.3px;top:506.54px;font-size:9px;color:#6c5a66;font-family:'Liberation Serif', serif;transform:scaleX(1.015);-webkit-text-stroke:0.15px #6c5a66">veniam, consequat, vel illum dolore eu feugiat</span>
<span class="t" style="left:598.3px;top:519.26px;font-size:9px;color:#6c5a66;font-family:'Liberation Serif', serif;transform:scaleX(1.018);-webkit-text-stroke:0.15px #6c5a66">nulla facilisis at vero eros et accumsan.</span>
<span class="t" style="left:598.3px;top:540.76px;font-size:9px;color:#6c5a66;font-family:'Liberation Serif', serif;transform:scaleX(1.031);-webkit-text-stroke:0.15px #6c5a66">Duis utem dolor in hendrerit in vulputate velit</span>
<span class="t" style="left:42.5px;top:573.84px;font-size:12px;color:#444444;transform:scaleX(0.936);-webkit-text-stroke:0.2px #444444">Страница: 2 из 2</span>
<span class="t" style="left:169.8px;top:573.84px;font-size:12px;color:#444444;transform:scaleX(0.920);-webkit-text-stroke:0.2px #444444">7,43; 0,84 дюйм</span>
<span class="t" style="left:767.4px;top:573.84px;font-size:12px;color:#444444;transform:scaleX(0.848);-webkit-text-stroke:0.2px #444444">79 %</span>
<span class="t" style="left:100.8px;top:333.99px;font-size:11px;color:#222222;font-weight:bold;transform:scaleX(0.784);-webkit-text-stroke:0.2px #222222">1</span>
<span class="t" style="left:100.2px;top:435.09px;font-size:11px;color:#222222;transform:scaleX(0.865);-webkit-text-stroke:0.2px #222222">2</span>
<div style="left:162px;top:63.5px;width:78px;height:102px;border:3.2px solid #ff0000;box-sizing:border-box;border-radius:11px;box-shadow:0 0 0 1.2px #fff, 3px 4px 6px 1px rgba(0,0,0,.35), inset 0 0 0 1.2px #fff, inset 4px 4px 7px rgba(0,0,0,.38)"></div>
</body></html>
